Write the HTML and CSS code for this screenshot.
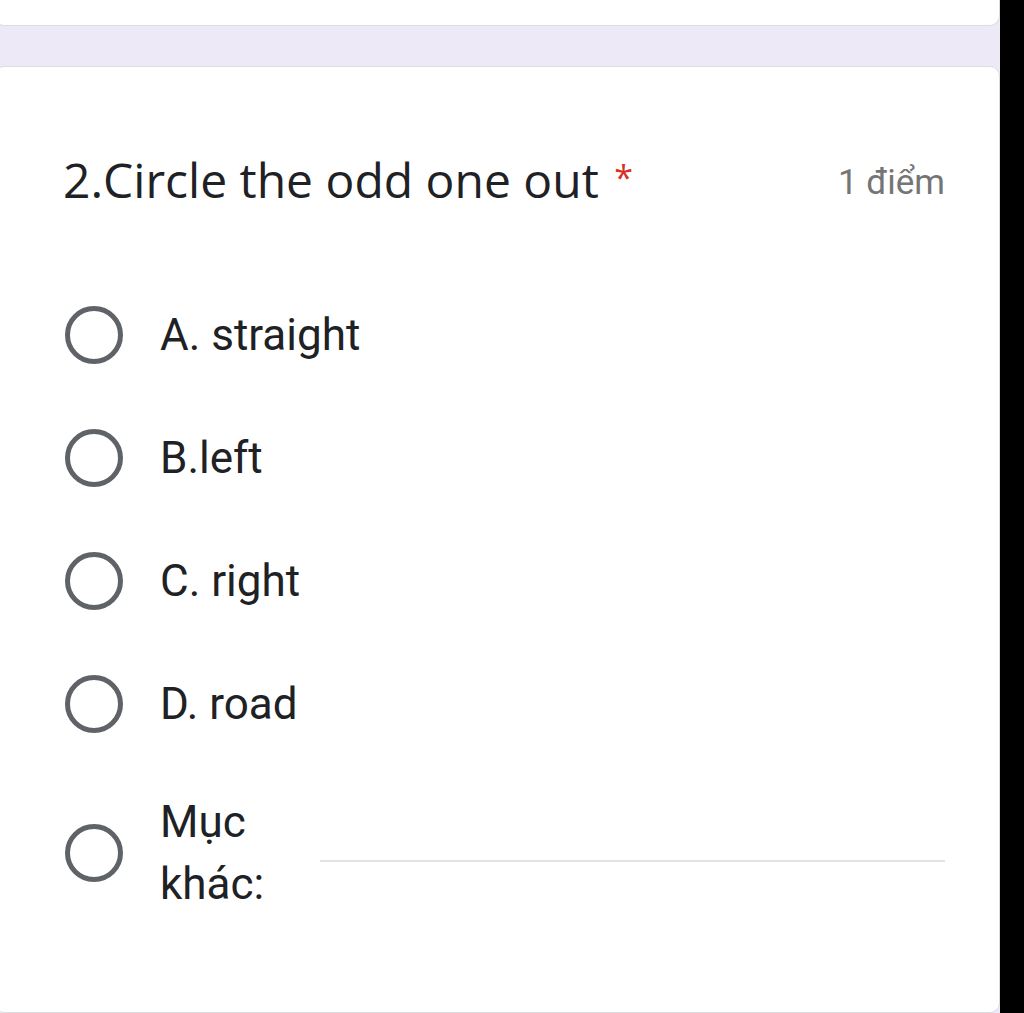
FILE: index.html
```html
<!DOCTYPE html>
<html lang="vi">
<head>
  <meta charset="UTF-8">
  <meta name="viewport" content="width=device-width, initial-scale=1.0">
  <title>2.Circle the odd one out</title>
  <link rel="stylesheet" href="styles.css">
</head>
<body>
  <div class="screen">
    <div class="form">
      <div class="card card-prev"></div>

      <div class="card question">
        <div class="question-head">
          <h2 class="question-title">2.Circle the odd one out <span class="required">*</span></h2>
          <span class="points">1 điểm</span>
        </div>

        <div class="options">
          <label class="option">
            <span class="radio"></span>
            <span class="option-text">A. straight</span>
          </label>
          <label class="option">
            <span class="radio"></span>
            <span class="option-text">B.left</span>
          </label>
          <label class="option">
            <span class="radio"></span>
            <span class="option-text">C. right</span>
          </label>
          <label class="option">
            <span class="radio"></span>
            <span class="option-text">D. road</span>
          </label>
          <label class="option option-other">
            <span class="radio"></span>
            <span class="option-text other-label">Mục<br>khác:</span>
            <span class="other-input"></span>
          </label>
        </div>
      </div>
    </div>
    <div class="edge"></div>
  </div>
</body>
</html>
```

FILE: styles.css
```css
body {
  margin: 0;
  background: #000;
  font-family: Roboto, "Noto Sans", Arial, sans-serif;
  color: #202124;
}

.screen {
  display: flex;
  height: 1013px;
  overflow: hidden;
}

.form {
  width: 1000px;
  background: #ede9f7;
  display: flex;
  flex-direction: column;
  gap: 40px;
}

.edge {
  flex: 1;
  background: #000;
}

.card {
  background: #fff;
  border: 1px solid #dadce0;
  border-radius: 10px;
  margin-left: -6px;
}

.card-prev {
  height: 25px;
  border-top: none;
  border-radius: 0 0 10px 10px;
}

.question {
  flex: 1;
  padding: 82px 54px 0 68px;
}

.question-head {
  display: flex;
  align-items: center;
  justify-content: space-between;
  height: 60px;
}

.question-title {
  margin: 0;
  font-family: "Open Sans", "Noto Sans", sans-serif;
  font-weight: 400;
  font-size: 48px;
  color: #202124;
}

.required {
  color: #d93025;
  font-size: 34px;
  vertical-align: 8px;
  margin-left: 3px;
}

.points {
  font-size: 35px;
  color: #757575;
  padding-top: 6px;
}

.options {
  display: flex;
  flex-direction: column;
  margin-top: 64px;
}

.option {
  display: flex;
  align-items: center;
  height: 123px;
}

.radio {
  width: 48px;
  height: 48px;
  border: 5px solid #5f6368;
  border-radius: 50%;
  margin-left: 2px;
  flex-shrink: 0;
}

.option-text {
  margin-left: 37px;
  font-size: 44px;
  color: #202124;
}

.option-other {
  height: 124px;
  margin-top: 26px;
}

.other-label {
  line-height: 62px;
}

.other-input {
  flex: 1;
  height: 2px;
  background: #e3e3e3;
  margin: 16px 0 0 56px;
}
```
